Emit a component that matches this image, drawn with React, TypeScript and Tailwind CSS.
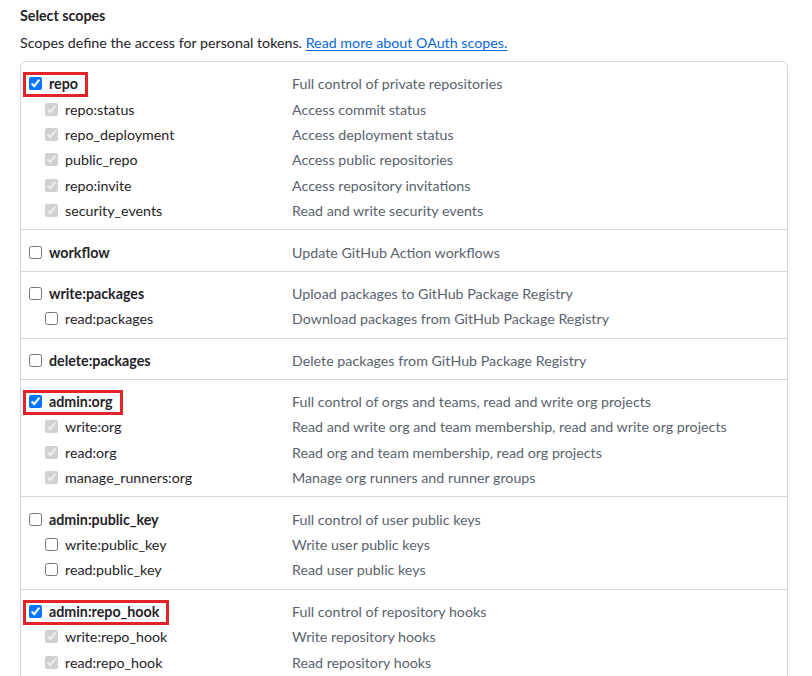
import React from "react";

type Scope = {
  name: string;
  desc: string;
  checked?: boolean;
  highlight?: boolean;
  children?: { name: string; desc: string }[];
};

const scopes: Scope[] = [
  {
    name: "repo",
    desc: "Full control of private repositories",
    checked: true,
    highlight: true,
    children: [
      { name: "repo:status", desc: "Access commit status" },
      { name: "repo_deployment", desc: "Access deployment status" },
      { name: "public_repo", desc: "Access public repositories" },
      { name: "repo:invite", desc: "Access repository invitations" },
      { name: "security_events", desc: "Read and write security events" },
    ],
  },
  { name: "workflow", desc: "Update GitHub Action workflows" },
  {
    name: "write:packages",
    desc: "Upload packages to GitHub Package Registry",
    children: [{ name: "read:packages", desc: "Download packages from GitHub Package Registry" }],
  },
  { name: "delete:packages", desc: "Delete packages from GitHub Package Registry" },
  {
    name: "admin:org",
    desc: "Full control of orgs and teams, read and write org projects",
    checked: true,
    highlight: true,
    children: [
      { name: "write:org", desc: "Read and write org and team membership, read and write org projects" },
      { name: "read:org", desc: "Read org and team membership, read org projects" },
      { name: "manage_runners:org", desc: "Manage org runners and runner groups" },
    ],
  },
  {
    name: "admin:public_key",
    desc: "Full control of user public keys",
    children: [
      { name: "write:public_key", desc: "Write user public keys" },
      { name: "read:public_key", desc: "Read user public keys" },
    ],
  },
  {
    name: "admin:repo_hook",
    desc: "Full control of repository hooks",
    checked: true,
    highlight: true,
    children: [
      { name: "write:repo_hook", desc: "Write repository hooks" },
      { name: "read:repo_hook", desc: "Read repository hooks" },
    ],
  },
];

function ScopeGroup({ scope, first }: { scope: Scope; first: boolean }) {
  return (
    <div className={`pt-[9px] pb-[6px] ${first ? "" : "border-t border-[#d1d9e0]"}`}>
      {/* parent row */}
      <div className="grid grid-cols-[263px_1fr] h-[25.4px] items-center pl-2">
        <label className="relative inline-flex items-center self-stretch w-fit">
          <input type="checkbox" defaultChecked={scope.checked} className="w-[13px] h-[13px]" />
          <span className="ml-[7px] font-bold text-[#1f2328]">{scope.name}</span>
          {scope.highlight && (
            <span className="absolute -left-[6px] -right-[10px] top-[1px] -bottom-[1px] border-[3px] border-[#e3232a] pointer-events-none" />
          )}
        </label>
        <span className="text-[#59636e]">{scope.desc}</span>
      </div>

      {/* child rows */}
      {scope.children?.map((c) => (
        <div key={c.name} className="grid grid-cols-[263px_1fr] h-[25.4px] items-center pl-2">
          <label className="inline-flex items-center pl-4">
            <input
              type="checkbox"
              checked={!!scope.checked}
              disabled={!!scope.checked}
              readOnly
              className="w-[13px] h-[13px]"
            />
            <span className="ml-[7px] text-[#1f2328]">{c.name}</span>
          </label>
          <span className="text-[#59636e]">{c.desc}</span>
        </div>
      ))}
    </div>
  );
}

export default function App() {
  return (
    <div
      className="w-[812px] h-[676px] overflow-hidden bg-white pl-5 pt-[5px] text-[14.25px] leading-[21px]"
      style={{ fontFamily: "Lato, sans-serif" }}
    >
      <h3 className="font-bold text-[#1f2328]">Select scopes</h3>
      <p className="mt-[6px] text-[#1f2328]">
        Scopes define the access for personal tokens.{" "}
        <a href="#" className="text-[#0969da] underline underline-offset-2">
          Read more about OAuth scopes.
        </a>
      </p>

      <div className="mt-[8px] w-[768px] rounded-t-md border border-[#d1d9e0]">
        {scopes.map((s, i) => (
          <ScopeGroup key={s.name} scope={s} first={i === 0} />
        ))}
      </div>
    </div>
  );
}
